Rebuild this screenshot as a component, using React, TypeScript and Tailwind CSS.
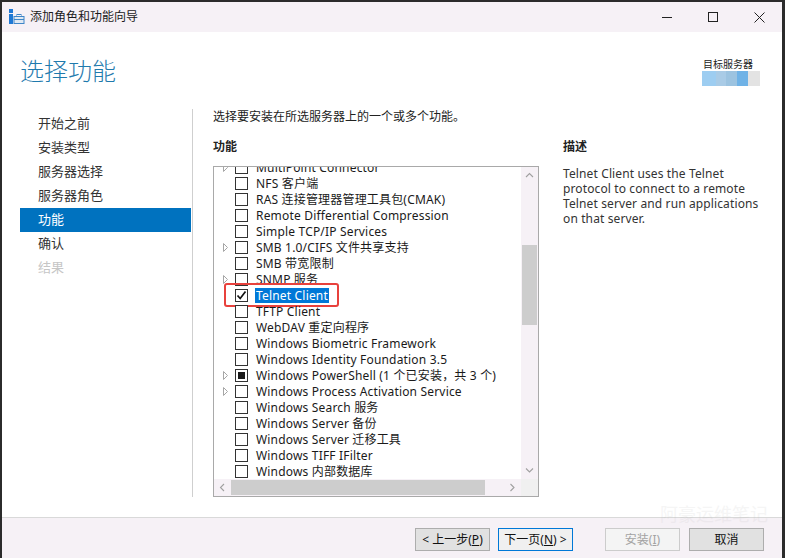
import React from "react";

const FONT = { fontFamily: '"Noto Sans", "Noto Sans CJK SC", sans-serif' };

type Item = { label: string; expand?: boolean; state?: "checked" | "partial"; selected?: boolean };

const items: Item[] = [
  { label: "MultiPoint Connector", expand: true },
  { label: "NFS 客户端" },
  { label: "RAS 连接管理器管理工具包(CMAK)" },
  { label: "Remote Differential Compression" },
  { label: "Simple TCP/IP Services" },
  { label: "SMB 1.0/CIFS 文件共享支持", expand: true },
  { label: "SMB 带宽限制" },
  { label: "SNMP 服务", expand: true },
  { label: "Telnet Client", state: "checked", selected: true },
  { label: "TFTP Client" },
  { label: "WebDAV 重定向程序" },
  { label: "Windows Biometric Framework" },
  { label: "Windows Identity Foundation 3.5" },
  { label: "Windows PowerShell (1 个已安装，共 3 个)", expand: true, state: "partial" },
  { label: "Windows Process Activation Service", expand: true },
  { label: "Windows Search 服务" },
  { label: "Windows Server 备份" },
  { label: "Windows Server 迁移工具" },
  { label: "Windows TIFF IFilter" },
  { label: "Windows 内部数据库" },
  { label: "Wireless LAN Service" },
];

const steps = ["开始之前", "安装类型", "服务器选择", "服务器角色", "功能", "确认", "结果"];

function Row({ item }: { item: Item }) {
  return (
    <div className="relative h-[16px] flex items-center">
      <div className="w-[21px] h-full flex items-center justify-center pl-[1px]">
        {item.expand && (
          <svg width="5" height="9" viewBox="0 0 5 9">
            <path d="M0.5 0.5 L4.5 4.5 L0.5 8.5 Z" fill="none" stroke="#a6a6a6" strokeWidth="1" />
          </svg>
        )}
      </div>
      <div className="w-[13px] h-[13px] border border-[#333] bg-white flex items-center justify-center shrink-0">
        {item.state === "checked" && (
          <svg width="11" height="11" viewBox="0 0 11 11">
            <path d="M1.5 5.5 L4.2 8.5 L9.5 1.5" fill="none" stroke="#111" strokeWidth="1.7" />
          </svg>
        )}
        {item.state === "partial" && <div className="w-[7px] h-[7px] bg-[#1a1a1a]" />}
      </div>
      <div
        className={
          "ml-[7px] px-[1px] leading-[15px] whitespace-nowrap text-[12px] tracking-[0.18px] " +
          (item.selected ? "bg-[#0078d7] text-white" : "text-[#1a1a1a]")
        }
      >
        {item.label}
      </div>
      {item.selected && (
        <div className="absolute left-[10px] top-[-4px] w-[115px] h-[24px] border-2 border-[#e8413c] rounded-[3px]" />
      )}
    </div>
  );
}

function Chevron({ dir }: { dir: "up" | "down" | "left" | "right" }) {
  const d = {
    up: "M1 5 L4.5 1.5 L8 5",
    down: "M1 1.5 L4.5 5 L8 1.5",
    left: "M5 1 L1.5 4.5 L5 8",
    right: "M1.5 1 L5 4.5 L1.5 8",
  }[dir];
  const vertical = dir === "up" || dir === "down";
  return (
    <svg width={vertical ? 9 : 7} height={vertical ? 7 : 9} viewBox={vertical ? "0 0 9 7" : "0 0 7 9"}>
      <path d={d} fill="none" stroke="#a0a0a0" strokeWidth="1.1" />
    </svg>
  );
}

function Button({ label, kind }: { label: React.ReactNode; kind?: "default" | "disabled" }) {
  const cls =
    kind === "default"
      ? "border-[#0078d7] bg-[#f0f0f0] text-[#111]"
      : kind === "disabled"
      ? "border-[#cccccc] bg-[#f4f4f4] text-[#a3a3a3]"
      : "border-[#adadad] bg-[#e1e1e1] text-[#111]";
  return (
    <div className={"relative w-[75px] h-[23px] border flex items-center justify-center text-[12px] " + cls}>{label}</div>
  );
}

export default function App() {
  return (
    <div className="w-[785px] h-[558px] bg-[#2b2b2b] pt-[2px] pl-[2px] pr-[3px] flex overflow-hidden" style={FONT}>
      <div className="relative flex-1 flex flex-col bg-white">
        {/* title bar */}
        <div className="h-[30px] bg-[#f6f1f6] flex items-center shrink-0">
          <svg className="ml-[7px]" width="16" height="16" viewBox="0 0 16 16">
            <rect x="0" y="0" width="4" height="4" fill="#1e78d4" />
            <rect x="0" y="5" width="4" height="10" fill="#1e78d4" />
            <rect x="5" y="7.5" width="10" height="7" fill="#dfe9f3" stroke="#3f86c8" strokeWidth="1" />
            <rect x="8" y="5.5" width="4" height="2" fill="none" stroke="#3f86c8" strokeWidth="1" />
            <line x1="5" y1="10.5" x2="15" y2="10.5" stroke="#3f86c8" strokeWidth="1" />
          </svg>
          <span className="ml-[5px] text-[12px] text-[#1a1a1a]">添加角色和功能向导</span>
          <div className="ml-auto flex items-center h-full">
            <div className="w-[46px] h-full flex items-center justify-center">
              <div className="w-[10px] h-[1px] bg-[#222]" />
            </div>
            <div className="w-[46px] h-full flex items-center justify-center">
              <div className="w-[10px] h-[10px] border border-[#222]" />
            </div>
            <div className="w-[46px] h-full flex items-center justify-center">
              <svg width="11" height="11" viewBox="0 0 11 11">
                <path d="M0.5 0.5 L10.5 10.5 M10.5 0.5 L0.5 10.5" stroke="#222" strokeWidth="1" />
              </svg>
            </div>
          </div>
        </div>

        {/* content */}
        <div className="flex-1 flex flex-col">
          <div className="flex justify-between items-start pt-[23px] pl-[18px] pr-[22px]">
            <div className="text-[24px] leading-[32px] font-light text-[#1f7aad]">选择功能</div>
            <div className="flex flex-col items-end pt-[3px]">
              <div className="text-[10px] leading-[12px] text-[#222] pr-[7px]">目标服务器</div>
              <div className="flex h-[15px] mt-[1px]">
                <div className="w-[14px] bg-[#9dcdf1]" />
                <div className="w-[10px] bg-[#a9cbe6]" />
                <div className="w-[11px] bg-[#9cc3e0]" />
                <div className="w-[11px] bg-[#6fb2e6]" />
                <div className="w-[12px] bg-[#e3e3e3]" />
              </div>
            </div>
          </div>

          <div className="flex mt-[22px] pl-[18px] h-[388px]">
            {/* nav */}
            <div className="w-[172px] pt-[3px]">
              {steps.map((s, i) => (
                <div
                  key={s}
                  className={
                    "h-[24px] pl-[18px] flex items-center text-[13px] " +
                    (i === 4
                      ? "bg-[#0072bf] text-white mr-[1px]"
                      : i === 6
                      ? "text-[#c6c6c6]"
                      : "text-[#333]")
                  }
                >
                  {s}
                </div>
              ))}
            </div>

            {/* main */}
            <div className="border-l border-[#cfcfcf] pl-[20px] flex">
              <div className="w-[326px] flex flex-col">
                <div className="text-[12px] leading-[16px] text-[#222] whitespace-nowrap">
                  选择要安装在所选服务器上的一个或多个功能。
                </div>
                <div className="mt-[14px] text-[12px] leading-[16px] font-bold text-[#222]">功能</div>
                <div className="mt-[11px] h-[331px] border border-[#a9a9a9] flex flex-col">
                  <div className="flex flex-1 min-h-0">
                    <div className="flex-1 overflow-hidden">
                      <div className="mt-[-8px]">
                        {items.map((it) => (
                          <Row key={it.label} item={it} />
                        ))}
                      </div>
                    </div>
                    <div className="w-[17px] bg-[#f6f1f6] flex flex-col items-center">
                      <div className="h-[17px] flex items-center justify-center">
                        <Chevron dir="up" />
                      </div>
                      <div className="mt-[61px] w-[15px] h-[80px] bg-[#cdcdcd]" />
                      <div className="mt-auto h-[17px] flex items-center justify-center">
                        <Chevron dir="down" />
                      </div>
                    </div>
                  </div>
                  <div className="h-[17px] flex shrink-0">
                    <div className="flex-1 bg-[#f6f1f6] flex items-center">
                      <div className="w-[17px] flex justify-center">
                        <Chevron dir="left" />
                      </div>
                      <div className="w-[254px] h-[15px] bg-[#cdcdcd]" />
                      <div className="ml-auto w-[17px] flex justify-center">
                        <Chevron dir="right" />
                      </div>
                    </div>
                    <div className="w-[17px] bg-[#f0f0f0]" />
                  </div>
                </div>
              </div>

              {/* description */}
              <div className="ml-[24px] w-[205px] pt-[30px]">
                <div className="text-[12px] leading-[16px] font-bold text-[#222]">描述</div>
                <div className="mt-[11px] text-[12px] leading-[15px] tracking-[0.12px] text-[#333]">
                  Telnet Client uses the Telnet protocol to connect to a remote Telnet server and run applications
                  on that server.
                </div>
              </div>
            </div>
          </div>
        </div>

        {/* footer */}
        <div className="h-[41px] border-t border-[#d9d9d9] bg-[#f6f1f6] flex items-start pt-[10px] pr-[18px] justify-end shrink-0">
          <Button label={<span>&lt; 上一步(<u>P</u>)</span>} />
          <div className="ml-[8px]">
            <Button kind="default" label={<span>下一页(<u>N</u>) &gt;</span>} />
          </div>
          <div className="ml-[32px]">
            <Button kind="disabled" label={<span>安装(<u>I</u>)</span>} />
          </div>
          <div className="ml-[9px]">
            <Button label="取消" />
          </div>
        </div>

        <div className="absolute left-[658px] top-[500px] text-[18px] leading-[24px] text-[#b0b0b0] opacity-[0.12] whitespace-nowrap pointer-events-none">
          阿豪运维笔记
        </div>
      </div>
    </div>
  );
}
